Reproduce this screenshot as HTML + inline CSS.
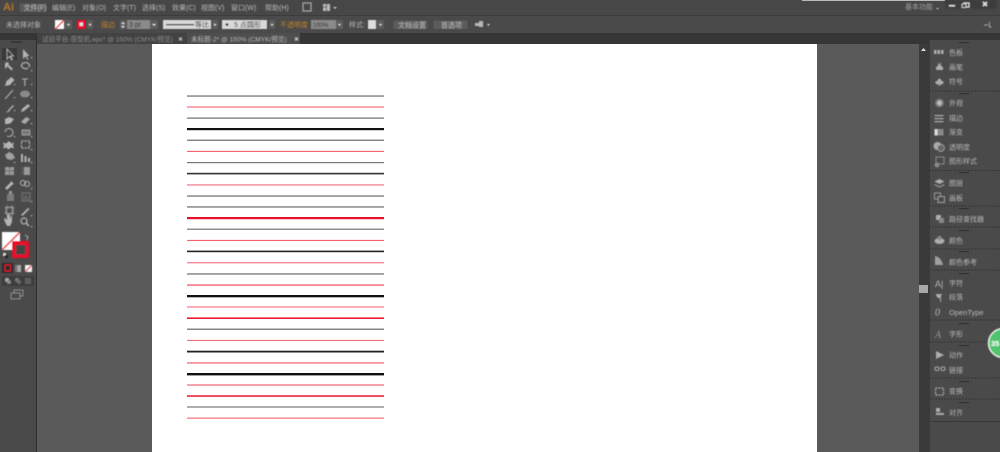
<!DOCTYPE html>
<html><head><meta charset="utf-8"><style>
html,body{margin:0;padding:0;background:#555;width:1000px;height:452px;overflow:hidden}
svg{display:block}
text{font-family:"Liberation Sans","Noto Sans CJK SC",sans-serif;font-size:7px;fill:#b8b8b8}
.o{fill:#c2812c}
</style></head><body>
<svg width="1000" height="452" viewBox="0 0 1000 452" xmlns="http://www.w3.org/2000/svg">
<defs><filter id="b" x="-5%" y="-5%" width="110%" height="110%"><feGaussianBlur stdDeviation="0.42"/></filter></defs>
<rect width="1000" height="452" fill="#5a5a5a"/>
<!-- top bars -->
<rect width="1000" height="15" fill="#474747"/>
<rect y="15" width="1000" height="18" fill="#4a4a4a"/>
<rect y="15" width="1000" height="1" fill="#3c3c3c"/>
<rect y="33" width="1000" height="11" fill="#363636"/>
<rect x="802" y="0" width="143" height="1" fill="#bbb"/>
<!-- tabs -->
<rect x="37" y="33" width="150" height="11" fill="#424242"/>
<rect x="187" y="33" width="113" height="11" fill="#4e4e4e"/>
<!-- canvas -->
<rect x="36" y="44" width="883" height="408" fill="#5a5a5a"/>
<rect x="152" y="44" width="665" height="408" fill="#fff"/>
<!-- lines -->
<g>
<rect x="187" y="95.300" width="197" height="1.500" fill="#8a8a8a"/>
<rect x="187" y="106.300" width="197" height="1.500" fill="#f58b98"/>
<rect x="187" y="117.400" width="197" height="1.500" fill="#8a8a8a"/>
<rect x="187" y="128" width="197" height="2.200" fill="#111"/>
<rect x="187" y="139.600" width="197" height="1.300" fill="#777"/>
<rect x="187" y="150.900" width="197" height="1" fill="#f4515f"/>
<rect x="187" y="162" width="197" height="1.200" fill="#777"/>
<rect x="187" y="172.800" width="197" height="1.600" fill="#333"/>
<rect x="187" y="184.200" width="197" height="1.400" fill="#f58b98"/>
<rect x="187" y="195.300" width="197" height="1.500" fill="#8a8a8a"/>
<rect x="187" y="206.200" width="197" height="1.500" fill="#8a8a8a"/>
<rect x="187" y="217" width="197" height="2.200" fill="#e8102a"/>
<rect x="187" y="228.600" width="197" height="1.200" fill="#777"/>
<rect x="187" y="239.900" width="197" height="1" fill="#f4515f"/>
<rect x="187" y="250.600" width="197" height="1.600" fill="#222"/>
<rect x="187" y="262" width="197" height="1.400" fill="#f58b98"/>
<rect x="187" y="273.200" width="197" height="1.500" fill="#888"/>
<rect x="187" y="284.100" width="197" height="2" fill="#f78e9a"/>
<rect x="187" y="295" width="197" height="2.300" fill="#111"/>
<rect x="187" y="306.300" width="197" height="1.400" fill="#f58b98"/>
<rect x="187" y="317.400" width="197" height="1.600" fill="#ec1c30"/>
<rect x="187" y="328.600" width="197" height="1.200" fill="#666"/>
<rect x="187" y="339.900" width="197" height="1" fill="#f4616d"/>
<rect x="187" y="350.700" width="197" height="1.800" fill="#222"/>
<rect x="187" y="362.200" width="197" height="1.500" fill="#f4808c"/>
<rect x="187" y="373" width="197" height="2.400" fill="#111"/>
<rect x="187" y="384.200" width="197" height="1.600" fill="#f58b98"/>
<rect x="187" y="395.200" width="197" height="1.700" fill="#ee3048"/>
<rect x="187" y="406.400" width="197" height="1.200" fill="#777"/>
<rect x="187" y="417.600" width="197" height="1.100" fill="#f4616d"/>
</g>
<!-- left toolbar -->
<rect x="0" y="33" width="36" height="419" fill="#4a4a4a"/>
<rect x="0" y="33" width="36" height="7" fill="#363636"/>
<rect x="36" y="33" width="1" height="419" fill="#2d2d2d"/>
<rect x="11" y="41.500" width="11" height="1" fill="#262626"/>
<rect x="2" y="48" width="15" height="12" fill="#3a3a3a"/>
<!-- right strip and panel -->
<rect x="919" y="44" width="10" height="408" fill="#3a3a3a"/>
<rect x="919" y="285" width="9" height="8" fill="#a8a8a8"/>
<path d="M921 51h5l-2.500-3z" fill="#ddd"/>
<rect x="929" y="40" width="71" height="412" fill="#4a4a4a"/>
<rect x="929" y="40" width="1" height="412" fill="#3a3a3a"/>
<g fill="#333">
<rect x="959" y="42" width="10" height="1.200"/><rect x="959" y="93" width="10" height="1.200"/><rect x="959" y="172" width="10" height="1.200"/><rect x="959" y="208" width="10" height="1.200"/><rect x="959" y="230" width="10" height="1.200"/><rect x="959" y="251" width="10" height="1.200"/><rect x="959" y="273" width="10" height="1.200"/><rect x="959" y="323" width="10" height="1.200"/><rect x="959" y="345" width="10" height="1.200"/><rect x="959" y="381" width="10" height="1.200"/><rect x="959" y="402" width="10" height="1.200"/>
</g>
<g stroke="#373737" stroke-width="1" stroke-dasharray="2 1" fill="none">
<path d="M929 91H1000M929 170.500H1000M929 206H1000M929 227H1000M929 249H1000M929 270H1000M929 320H1000M929 342H1000M929 378H1000M929 399H1000"/>
</g>
<path d="M929 421.500H1000" stroke="#373737"/>
<!-- blurred chrome content -->
<g filter="url(#b)">
<text x="3" y="10.500" style="font-size:11px;font-weight:bold;fill:#b8762a">Ai</text>
<rect x="19" y="3" width="28" height="9.500" rx="1" fill="#5a5a5a" stroke="#383838" stroke-width=".6"/>
<text x="23.500" y="10">文件(F)</text>
<text x="52" y="10">编辑(E)</text>
<text x="82" y="10">对象(O)</text>
<text x="113" y="10">文字(T)</text>
<text x="142" y="10">选择(S)</text>
<text x="172" y="10">效果(C)</text>
<text x="201" y="10">视图(V)</text>
<text x="231" y="10">窗口(W)</text>
<text x="265" y="10">帮助(H)</text>
<rect x="303" y="3" width="8" height="8" fill="none" stroke="#aaa" stroke-width="1.200"/>
<rect x="323" y="4" width="7" height="7" fill="#bbb"/><path d="M326.500 4v7M323 7h3.500" stroke="#444" stroke-width=".8"/><path d="M333 7h4l-2 2z" fill="#ccc"/>
<text x="905" y="9" style="fill:#a0a0a0">基本功能</text><path d="M936 8h3l-1.500 1.500z" fill="#ccc"/>
<rect x="945" y="0" width="14" height="9" fill="#3e3e3e"/><rect x="959" y="0" width="14" height="9" fill="#3e3e3e"/><rect x="973" y="0" width="24" height="9" fill="#3e3e3e"/>
<rect x="949" y="5" width="6" height="1.500" fill="#ddd"/>
<rect x="964" y="3" width="5" height="4" fill="none" stroke="#ddd"/><rect x="962" y="4" width="4" height="3.500" fill="#3e3e3e" stroke="#ddd" stroke-width=".8"/>
<path d="M983 2l4 4M987 2l-4 4" stroke="#eee" stroke-width="1.300"/>

<!-- control bar -->
<text x="6" y="27">未选择对象</text>
<rect x="55" y="20" width="9" height="9" fill="#fff"/><path d="M55.500 29L64 20" stroke="#e8102a" stroke-width="1.300"/>
<rect x="65" y="20" width="7" height="9" fill="#5c5c5c"/><path d="M67 24h3l-1.500 2z" fill="#ddd"/>
<rect x="77" y="20" width="8.500" height="9" fill="#e8102a"/><rect x="79.500" y="22.500" width="3.500" height="3.500" fill="#ddd"/>
<rect x="87" y="20" width="6" height="9" fill="#5c5c5c"/><path d="M88.500 24h3l-1.500 2z" fill="#ddd"/>
<text x="101" y="27" class="o">描边</text>
<rect x="120" y="20" width="6" height="9" fill="#5c5c5c"/><path d="M121 24l2-2 2 2zM121 26h4l-2 2z" fill="#ddd"/>
<rect x="127" y="20" width="23" height="9" fill="#8a8a8a"/><text x="129" y="27" style="fill:#222">3 pt</text>
<rect x="150" y="20" width="8" height="9" fill="#5c5c5c"/><path d="M152 24h4l-2 2z" fill="#ddd"/>
<rect x="163" y="20" width="48" height="9" fill="#d9d9d9"/><rect x="166" y="24" width="28" height="1.200" fill="#111"/>
<text x="195" y="27" style="fill:#222">等比</text>
<rect x="212" y="20" width="6" height="9" fill="#5c5c5c"/><path d="M213.500 24h3l-1.500 2z" fill="#ddd"/>
<rect x="222" y="20" width="45" height="9" fill="#d9d9d9"/><circle cx="227" cy="24.500" r="1.300" fill="#111"/>
<text x="234" y="27" style="fill:#222">5 点圆形</text>
<rect x="269" y="20" width="6" height="9" fill="#5c5c5c"/><path d="M270.500 24h3l-1.500 2z" fill="#ddd"/>
<text x="280" y="27" class="o">不透明度</text>
<rect x="311" y="20" width="25" height="9" fill="#8a8a8a"/><text x="313" y="27" style="font-size:6px;fill:#222">100%</text>
<rect x="336" y="20" width="7" height="9" fill="#5c5c5c"/><path d="M338 24h3l-1.500 2z" fill="#ddd"/>
<text x="349" y="27">样式:</text>
<rect x="368" y="20" width="8" height="9" fill="#ddd"/>
<rect x="377" y="20" width="7" height="9" fill="#5c5c5c"/><path d="M379 24h3l-1.500 2z" fill="#ddd"/>
<rect x="393" y="20" width="35" height="9.500" fill="#5c5c5c" stroke="#3c3c3c" stroke-width=".5"/><text x="398" y="27.500">文档设置</text>
<rect x="433" y="20" width="35" height="9.500" fill="#5c5c5c" stroke="#3c3c3c" stroke-width=".5"/><text x="441" y="27.500">首选项</text>
<path d="M475 23h4v3h-4zM479 21h4v6h-4z" fill="#b8b8b8"/><path d="M487 24h3l-1.500 2z" fill="#ddd"/>
<path d="M984 25h4M989.500 22v5h2" stroke="#aaa" fill="none"/>
<!-- tabs text -->
<text x="42" y="41.500" style="font-size:6.600px;fill:#8e8e8e">试验平台-原型机.eps* @ 150% (CMYK/预览)</text>
<path d="M179 37.500l3 3M182 37.500l-3 3" stroke="#ccc"/>
<text x="191" y="41.500" style="font-size:6.600px;fill:#bbb">未标题-2* @ 150% (CMYK/预览)</text>
<path d="M295 37.500l3 3M298 37.500l-3 3" stroke="#ddd"/>
<!-- tools -->
<g fill="#b4b4b4">
<path d="M7 49v10l2.500-2.500 2 3.500 1-.7-2-3.200h3z" fill="none" stroke="#bbb" stroke-width=".9"/>
<path d="M23 49v10l2.500-2.500 2 3.500 1-.7-2-3.200h3z"/>
<path d="M5 63l3 3-3 3M9 65l4 4-1.500 1.500-4-4z"/><circle cx="7" cy="64" r="1.800"/>
<path d="M22 67a4 3 0 1 1 7 0M22 67q3 3 6 1" fill="none" stroke="#b4b4b4" stroke-width="1.200"/>
<path d="M5 86l1.500-5 5-4 3 3-4.500 5z"/>
<text x="21.500" y="86" style="font-size:11px">T</text>
<path d="M5 99L13 90" stroke="#b4b4b4" stroke-width="1" fill="none"/>
<ellipse cx="25" cy="94" rx="5" ry="3.500" fill="#8a8a8a"/>
<path d="M5 112q3 0 4-3l4-4 1 1-4 4q-1 3-5 2z"/>
<path d="M21 112l1-3 6-5 2 2-6 5z"/>
<path d="M5 124v-5l4-2 5 2-3 4-3 1z"/>
<path d="M21 122l5-5 4 2-5 5z" fill="#aaa"/>
<path d="M5 132a4 4 0 1 1 2 4" fill="none" stroke="#b4b4b4" stroke-width="1"/>
<path d="M22 130h8v5h-8z" fill="#777" stroke="#b4b4b4" stroke-width=".7"/>
<path d="M9 141l2.500 2.500 2.500-1-1 3 1 3-3-1-2.500 2-2.500-2-3 1 1-3-1-3 3 1z"/>
<rect x="21.500" y="141" width="8" height="7" fill="none" stroke="#b4b4b4" stroke-width="1.200" stroke-dasharray="2 1"/>
<path d="M5 155l4-3 4 2 2 4-4 2-4-1z" fill="#a0a0a0"/>
<path d="M21 162v-8h2v8zM24.500 162v-6h2v6zM28 162v-4h2v4z"/>
<rect x="5" y="167" width="9" height="8" fill="#999"/><path d="M5 171h9M9.500 167v8" stroke="#333" stroke-dasharray="1 1"/>
<rect x="21" y="167" width="9" height="8" fill="#999"/><rect x="21" y="167" width="3" height="8" fill="#555"/>
<path d="M5 188l5-5 1-2 3 3-2 1-5 5z"/>
<circle cx="23" cy="183" r="2.500" fill="none" stroke="#b4b4b4"/><circle cx="27" cy="184" r="2.500" fill="none" stroke="#b4b4b4"/>
<rect x="7" y="194" width="7" height="7" fill="#7a7a7a"/><rect x="9" y="191" width="3" height="3" fill="#999"/>
<rect x="22" y="193" width="8" height="8" fill="none" stroke="#777"/><path d="M24 200v-4M26 200v-5M28 200v-3" stroke="#777" fill="none"/>
<rect x="6" y="207" width="7" height="7" fill="none" stroke="#999"/><path d="M4 208h11M4 213h11M7 205v11M12 205v11" stroke="#999" stroke-width=".6" fill="none"/>
<path d="M21 215l7-7 1.500 1-7 7z"/>
<path d="M5 222l-1-3 1-1 2 2v-5h1v4-5h1v5-4h1v4l1-3h1v6l-2 4H7z"/>
<circle cx="24" cy="221" r="3" fill="none" stroke="#b4b4b4" stroke-width="1.200"/><path d="M26 223l3 3" stroke="#b4b4b4" stroke-width="1.500"/>
</g>
<g fill="#bbb"><rect x="31" y="57" width="1.200" height="1.200"/><rect x="31" y="70" width="1.200" height="1.200"/><rect x="31" y="84" width="1.200" height="1.200"/><rect x="14" y="84" width="1.200" height="1.200"/><rect x="31" y="97" width="1.200" height="1.200"/><rect x="14" y="97" width="1.200" height="1.200"/><rect x="31" y="110" width="1.200" height="1.200"/><rect x="14" y="110" width="1.200" height="1.200"/><rect x="31" y="123" width="1.200" height="1.200"/><rect x="31" y="136" width="1.200" height="1.200"/><rect x="14" y="136" width="1.200" height="1.200"/><rect x="31" y="149" width="1.200" height="1.200"/><rect x="31" y="162" width="1.200" height="1.200"/><rect x="14" y="162" width="1.200" height="1.200"/><rect x="31" y="188" width="1.200" height="1.200"/><rect x="31" y="201" width="1.200" height="1.200"/><rect x="31" y="215" width="1.200" height="1.200"/><rect x="31" y="226" width="1.200" height="1.200"/></g>
<!-- fill / stroke -->
<rect x="2" y="232" width="18" height="18" fill="#fff"/>
<path d="M2.500 249.500L20 232" stroke="#e8102a" stroke-width="1.500"/>
<path d="M25 235l3 2-1 3" stroke="#bbb" fill="none" stroke-width=".8"/>
<rect x="3" y="253" width="3" height="3" fill="#ddd"/><rect x="5" y="255" width="3" height="3" fill="#222"/>
<rect x="12" y="241" width="17" height="17" fill="#e8102a"/>
<rect x="16" y="245" width="9.500" height="9.500" fill="#444"/>
<rect x="2" y="263" width="11" height="10" fill="#2c2c2c"/><rect x="5" y="265" width="5.500" height="6" fill="none" stroke="#e8102a" stroke-width="1.200"/>
<rect x="15" y="265" width="6" height="7" fill="#aaa"/><rect x="15" y="265" width="2.500" height="7" fill="#777"/>
<rect x="25" y="265" width="7" height="7" fill="#f4f4f4"/><path d="M25 272l7-7" stroke="#e8102a" stroke-width="1.200"/>
<rect x="2" y="276" width="32" height="10" fill="#3c3c3c"/>
<circle cx="7" cy="280" r="2" fill="#aaa"/><circle cx="9" cy="282" r="2" fill="#888"/>
<circle cx="17" cy="280" r="2" fill="#777"/><circle cx="19" cy="282" r="2" fill="#666"/>
<rect x="25" y="278" width="6" height="6" fill="#5e5e5e"/>
<rect x="14" y="290" width="9" height="6" fill="#4a4a4a" stroke="#999" stroke-width=".8"/><rect x="11" y="293" width="9" height="6" fill="#4a4a4a" stroke="#999" stroke-width=".8"/>
<!-- panel icons -->
<g fill="#adadad">
<path d="M934 50h2.500v4h-2.500zM937.500 50h2.500v4h-2.500zM941 50h2.500v4h-2.500z"/>
<path d="M938 62l1.500 3 1.500-3v4l2 1v3h-7v-3l2-1zM935 64v2M943 64v2" />
<path d="M939.500 78l2.500 3 2 1-1.500 2.500-2-.5v1.500h-2V84l-2 .5-1.500-2.500 2-1z"/>
<circle cx="939.500" cy="103" r="4.500" fill="#777"/><circle cx="939.500" cy="103" r="2.500" fill="#bbb"/>
<path d="M934.500 115h9v1.200h-9zM934.500 118h9v1.200h-9zM934.500 121h9v1.200h-9z"/>
<rect x="934.500" y="129" width="9" height="6.500" fill="#888"/><rect x="934.500" y="129" width="3" height="6.500" fill="#ddd"/>
<circle cx="937.500" cy="146" r="4" fill="#aaa"/><circle cx="941" cy="148" r="3.500" fill="#666" stroke="#aaa" stroke-width=".7"/>
<rect x="936" y="157" width="8" height="7" fill="none" stroke="#999" stroke-width=".8"/><circle cx="937" cy="165" r="2.500" fill="#888"/>
<path d="M939.500 179l5 2.500-5 2.500-5-2.500zM934.500 184l5 2.500 5-2.500v1l-5 2.500-5-2.500z"/>
<rect x="934.500" y="193" width="6" height="6" fill="none" stroke="#aaa" stroke-width=".8"/><rect x="938" y="196.500" width="6.500" height="6" fill="#4a4a4a" stroke="#aaa" stroke-width=".8"/>
<rect x="936" y="215" width="5" height="5"/><rect x="939" y="218" width="5" height="5" fill="#888"/>
<ellipse cx="939.500" cy="241" rx="5" ry="3"/><circle cx="939.500" cy="238" r="2.200" fill="#888"/>
<path d="M935 265v-9q6 1 8 9z" fill="#a0a0a0"/>
<text x="935" y="287" style="font-size:9px">A|</text>
<path d="M936 294h6v1h-1v7h-1v-4h-2q-2-2-2-4z"/>
<text x="935" y="315.500" style="font-size:10px;font-style:italic;font-family:'Liberation Serif',serif">0</text>
<text x="935" y="338" style="font-size:10px;font-style:italic;font-family:'Liberation Serif',serif;fill:#999">A</text>
<path d="M936 351l8 4-8 4z"/>
<rect x="935" y="367" width="4" height="3.500" rx="1.500" fill="none" stroke="#aaa"/><rect x="941" y="367" width="4" height="3.500" rx="1.500" fill="none" stroke="#aaa"/>
<rect x="935.500" y="388" width="8" height="7" fill="none" stroke="#aaa" stroke-width="1.200" stroke-dasharray="2 1"/>
<path d="M936 408h4v4h-4zM936 413h8v2h-8z"/>
</g>
<g>
<text x="949" y="55">色板</text><text x="949" y="69.500">画笔</text><text x="949" y="84">符号</text>
<text x="949" y="105.500">外观</text><text x="949" y="120.500">描边</text><text x="949" y="134.500">渐变</text><text x="949" y="149.500">透明度</text><text x="949" y="163.500">图形样式</text>
<text x="949" y="185.500">图层</text><text x="949" y="200.500">画板</text>
<text x="949" y="221.500">路径查找器</text><text x="949" y="243">颜色</text><text x="949" y="264.500">颜色参考</text>
<text x="949" y="285.500">字符</text><text x="949" y="299.500">段落</text><text x="949" y="315" style="font-size:7.500px">OpenType</text>
<text x="949" y="336.500">字形</text><text x="949" y="357.500">动作</text><text x="949" y="372.500">链接</text>
<text x="949" y="393.500">变换</text><text x="949" y="415">对齐</text>
</g>
<!-- badge -->
<circle cx="1003" cy="343" r="14.500" fill="#4fc46e" stroke="#e8efe8" stroke-width="1.500"/>
<text x="991" y="346" style="font-size:7.500px;font-weight:bold;fill:#fff">35</text>
</g>
</svg>
</body></html>
